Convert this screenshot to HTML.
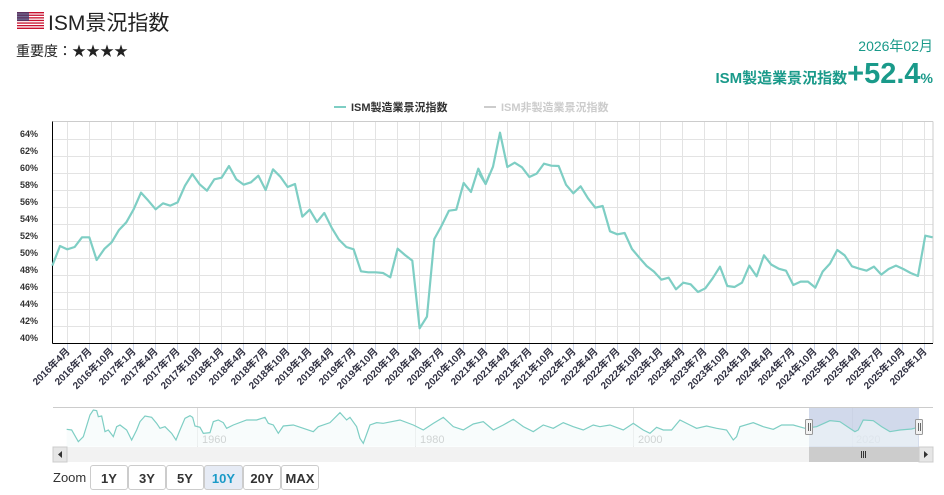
<!DOCTYPE html>
<html><head><meta charset="utf-8"><style>
body{margin:0;width:944px;height:495px;background:#fff;font-family:"Liberation Sans","Noto Sans CJK JP",sans-serif;position:relative;overflow:hidden}
.a{position:absolute;white-space:nowrap}
.btn{position:absolute;top:465px;height:25px;border:1px solid #ccc;border-radius:3px;font-weight:bold;font-size:13px;color:#333;text-align:center;line-height:25px;background:#fff;box-sizing:border-box}
</style></head><body>
<svg class="a" style="left:17px;top:12px" width="27" height="17" viewBox="0 0 27 17">
<rect width="27" height="17" fill="#fff"/>
<g fill="#c8102e"><rect y="0" width="27" height="1.4"/><rect y="2.6" width="27" height="1.3"/><rect y="5.2" width="27" height="1.3"/><rect y="7.8" width="27" height="1.3"/><rect y="10.4" width="27" height="1.3"/><rect y="13" width="27" height="1.3"/><rect y="15.6" width="27" height="1.4"/></g>
<rect width="12" height="9" fill="#3c3b6e" opacity=".75"/></svg>
<div class="a" style="left:48px;top:7px;font-size:21px;color:#222">ISM景況指数</div>
<div class="a" style="left:16px;top:41px;font-size:14px;color:#222">重要度：★★★★</div>
<div class="a" style="right:11px;top:36px;font-size:14px;color:#1a9a8a">2026年02月</div>
<div class="a" style="right:11px;top:58px;color:#1a9a8a;font-weight:bold"><span style="font-size:15px">ISM製造業景況指数</span><span style="font-size:29px">+52.4</span><span style="font-size:14px">%</span></div>

<svg class="a" style="left:0;top:0" width="944" height="495">
<g font-family="Liberation Sans,Noto Sans CJK JP,sans-serif" font-weight="bold" font-size="11">
<line x1="334" y1="107" x2="346" y2="107" stroke="#7ecec4" stroke-width="2"/>
<text x="351" y="111" fill="#333">ISM製造業景況指数</text>
<line x1="484" y1="107" x2="496" y2="107" stroke="#ccc" stroke-width="2"/>
<text x="501" y="111" fill="#ccc">ISM非製造業景況指数</text>
</g>
<g stroke="#e3e3e3" stroke-width="1" id="hg"></g>
<g id="vg" stroke="#e3e3e3"></g>
<line x1="52.5" y1="121.5" x2="933" y2="121.5" stroke="#ccc"/>
<line x1="933" y1="121.5" x2="933" y2="343" stroke="#ccc"/>
<line x1="52.5" y1="121.5" x2="52.5" y2="343.5" stroke="#000"/>
<line x1="52.5" y1="343.5" x2="933" y2="343.5" stroke="#000"/>
<g id="yl" font-family="Liberation Sans,sans-serif" font-size="9" font-weight="bold" fill="#333" text-anchor="end"></g>
<g id="xl" font-family="Liberation Sans,Noto Sans CJK JP,sans-serif" font-size="10" font-weight="bold" fill="#334" text-anchor="end"></g>
<g transform="translate(40,115) scale(0.3333)"><polyline fill="none" stroke="#7ecec4" stroke-width="2.2" vector-effect="non-scaling-stroke" stroke-linejoin="round" points="37,452 60,393 82,403 104,396 126,367 148,367 170,435 193,402 215,382 237,345 259,322 281,283 303,233 325,257 347,283 369,265 391,272 413,262 435,212 457,177 479,208 501,227 523,193 545,188 567,153 589,193 611,209 633,202 655,182 677,225 699,163 721,185 743,216 765,207 787,305 809,284 831,321 853,294 875,338 897,374 919,396 941,403 963,469 985,472 1007,472 1029,474 1051,487 1073,401 1095,420 1117,437 1139,640 1161,605 1183,372 1205,332 1227,287 1249,284 1271,204 1293,231 1315,161 1337,207 1350,175"/></g>
<g transform="translate(480,115) scale(0.3333)"><polyline fill="none" stroke="#7ecec4" stroke-width="2.2" vector-effect="non-scaling-stroke" stroke-linejoin="round" points="-3,175 17,207 39,155 60,53 82,156 104,143 126,157 148,186 170,176 192,146 214,152 236,153 258,209 280,235 302,214 324,250 346,278 368,273 390,349 412,358 434,354 456,402 478,428 500,453 522,470 544,494 566,488 588,523 610,503 632,508 654,531 676,520 698,490 720,455 742,513 764,516 786,503 808,452 830,484 852,421 874,449 896,461 918,467 940,510 962,500 984,500 1006,518 1028,470 1050,446 1072,405 1094,421 1116,454 1138,461 1160,467 1182,455 1204,479 1226,462 1248,452 1270,462 1292,474 1314,483 1336,362 1358,367"/></g>

<!-- navigator -->
<line x1="53" y1="407.5" x2="933" y2="407.5" stroke="#ccc"/>
<g stroke="#e0e0e0"><line x1="197.5" y1="408" x2="197.5" y2="447"/><line x1="415.5" y1="408" x2="415.5" y2="447"/><line x1="633.5" y1="408" x2="633.5" y2="447"/><line x1="852.5" y1="408" x2="852.5" y2="447"/></g>
<g font-family="Liberation Sans,sans-serif" font-size="11" fill="#999"><text x="202" y="443">1960</text><text x="420" y="443">1980</text><text x="638" y="443">2000</text><text x="856" y="443">2020</text></g>
<rect x="809" y="408" width="110" height="39" fill="#c5d0e6" opacity=".8"/>
<g transform="translate(0,330) scale(0.3333)"><polygon id="nf" fill="#f3fafa" fill-opacity=".6" points=""/><polyline id="nl" fill="none" stroke="#7ecec4" stroke-width="1.2" vector-effect="non-scaling-stroke" points="200,298 215,300 235,335 250,320 270,255 280,240 290,242 295,260 305,258 315,305 325,300 340,320 350,290 360,285 380,300 395,330 410,300 420,275 435,258 455,262 470,280 480,295 495,290 515,310 528,330 540,300 555,265 570,257 578,262 585,288 600,292 610,310 630,308 640,275 655,270 670,278 680,295 700,285 740,270 770,270 795,262 805,280 820,285 835,310 850,288 880,285 910,295 940,305 955,290 990,278 1020,248 1040,270 1050,262 1070,290 1080,325 1090,340 1110,285 1130,278 1150,280 1200,270 1240,285 1270,300 1300,280 1330,262 1360,290 1390,300 1420,282 1450,275 1480,300 1510,285 1540,268 1570,290 1600,305 1630,285 1660,295 1690,278 1720,290 1750,300 1780,285 1800,290 1830,285 1870,300 1900,280 1930,300 1950,310 1970,292 1990,300 2015,300 2040,270 2070,285 2090,295 2120,288 2150,295 2180,300 2200,330 2210,320 2220,290 2260,278 2290,290 2320,298 2345,285 2380,285 2415,295 2450,290 2490,272 2520,275 2550,295 2565,305 2575,300 2590,270 2620,272 2645,290 2670,305 2700,300 2735,297 2755,292"/></g>
<g fill="#f2f2f2" stroke="#999"><rect x="805.5" y="419.5" width="7" height="15" rx="1"/><rect x="915.5" y="419.5" width="7" height="15" rx="1"/></g>
<g stroke="#666"><line x1="808.5" y1="423" x2="808.5" y2="431"/><line x1="810.5" y1="423" x2="810.5" y2="431"/><line x1="918.5" y1="423" x2="918.5" y2="431"/><line x1="920.5" y1="423" x2="920.5" y2="431"/></g>
<rect x="53" y="447" width="880" height="15" fill="#f2f2f2"/>
<rect x="53" y="447" width="14" height="15" fill="#e6e6e6" stroke="#ccc"/>
<rect x="919" y="447" width="14" height="15" fill="#e6e6e6" stroke="#ccc"/>
<rect x="809" y="447" width="110" height="15" fill="#ccc"/>
<path d="M58 454.5 L62 451 L62 458Z M928 454.5 L924 451 L924 458Z" fill="#333"/>
<g stroke="#333"><line x1="861.5" y1="451" x2="861.5" y2="458"/><line x1="863.5" y1="451" x2="863.5" y2="458"/><line x1="865.5" y1="451" x2="865.5" y2="458"/></g>
</svg>
<div class="a" style="left:53px;top:470px;font-size:13px;color:#333">Zoom</div>
<div class="btn" style="left:90px;width:38px">1Y</div>
<div class="btn" style="left:128px;width:38px">3Y</div>
<div class="btn" style="left:166px;width:38px">5Y</div>
<div class="btn" style="left:204px;width:39px;background:#e6ebf5;color:#1a9ac8">10Y</div>
<div class="btn" style="left:243px;width:38px">20Y</div>
<div class="btn" style="left:281px;width:38px">MAX</div>
<script>
var ns="http://www.w3.org/2000/svg";
function el(p,t,a,txt){var e=document.createElementNS(ns,t);for(var k in a)e.setAttribute(k,a[k]);if(txt)e.textContent=txt;document.getElementById(p).appendChild(e);}
for(var i=0;i<13;i++){var y=139+i*17;el("hg","line",{x1:53,x2:933,y1:y+.5,y2:y+.5});el("yl","text",{x:38,y:y-2},(64-2*i)+"%");}
var ms=[4,7,10,1];
for(var i=0;i<40;i++){var x=Math.round(67.3+i*21.97)+.5;el("vg","line",{x1:x,x2:x,y1:122,y2:343});el("vg","line",{x1:x,x2:x,y1:344,y2:350,stroke:"#ccd6eb"});
var yr=2016+Math.floor((i+1)/4);var m=ms[i%4];el("xl","text",{x:x+3,y:352,transform:"rotate(-45 "+(x+3)+" 352)"},yr+"年"+m+"月");}
var p=document.getElementById("nl").getAttribute("points");
document.getElementById("nf").setAttribute("points","200,350 "+p+" 2755,350");
</script>
</body></html>
